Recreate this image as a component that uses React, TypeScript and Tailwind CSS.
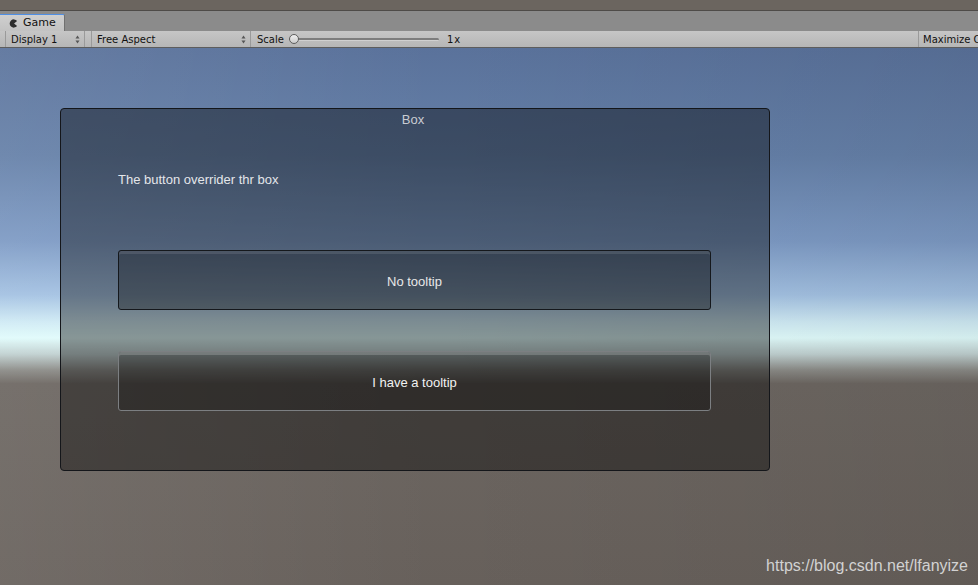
import React from "react";

const Arrows = () => (
  <svg width="5" height="9" viewBox="0 0 5 9" className="shrink-0">
    <path d="M2.5 0.5 L4.5 3.5 L0.5 3.5 Z" fill="#555" />
    <path d="M2.5 8.5 L4.5 5.5 L0.5 5.5 Z" fill="#555" />
  </svg>
);

const GameIcon = () => (
  <svg width="9" height="9" viewBox="0 0 10 10" className="shrink-0">
    <path d="M9 2.2 A4.6 4.6 0 1 0 9 7.8 L5.6 5 Z" fill="#2e2e2e" />
  </svg>
);

const UnityButton = ({ label, hover }: { label: string; hover?: boolean }) => (
  <div
    className={
      hover
        ? "h-[60px] w-[593px] flex items-center justify-center pt-[3px] rounded-[3px] border border-[#7c7f82] bg-black/25 shadow-[inset_0_3px_0_rgba(255,255,255,0.18)] text-[13px] text-[#f2f2f2]"
        : "h-[60px] w-[593px] flex items-center justify-center pt-[3px] rounded-[3px] border border-[#15181c] bg-black/30 shadow-[inset_0_3px_0_rgba(255,255,255,0.1)] text-[13px] text-[#e8e8e8]"
    }
  >
    {label}
  </div>
);

export default function App() {
  return (
    <div
      className="relative w-[978px] h-[585px] flex flex-col overflow-hidden"
      style={{ fontFamily: '"DejaVu Sans", sans-serif' }}
    >
      {/* outer strip */}
      <div className="h-[10px] bg-[#6b655f] border-b border-[#4e4b48] box-content" />

      {/* tab bar */}
      <div className="h-[20px] bg-[#8b8b8b] flex items-end">
        <div className="h-[17px] w-[65px] bg-[linear-gradient(to_bottom,#cfcfcf,#c2c2c2)] border-t border-[#4f8fe6] border-r border-r-[#707070] rounded-tr-[2px] flex items-center gap-[5px] pl-[9px] text-[11px] text-[#111]">
          <GameIcon />
          <span>Game</span>
        </div>
      </div>

      {/* toolbar */}
      <div className="h-[17px] bg-[linear-gradient(to_bottom,#c6c6c6,#b6b6b6)] border-b border-[#5d5d5d] flex items-center text-[10px] text-[#111]">
        <div className="w-[5px]" />
        <div className="h-full w-[80px] border-l border-r border-[#9a9a9a] flex items-center justify-between pl-[5px] pr-[4px]">
          <span>Display 1</span>
          <Arrows />
        </div>
        <div className="w-[6px]" />
        <div className="h-full w-[160px] border-l border-r border-[#9a9a9a] flex items-center justify-between pl-[5px] pr-[4px]">
          <span>Free Aspect</span>
          <Arrows />
        </div>
        <div className="pl-[6px]">Scale</div>
        <div className="ml-[5px] relative w-[150px] h-[10px] flex items-center">
          <div className="w-full h-[3px] rounded-full bg-[#7d7d7d] border-b border-[#d0d0d0]" />
          <div className="absolute left-0 top-0 w-[10px] h-[10px] rounded-full border border-[#5e5e5e] bg-[linear-gradient(to_bottom,#f0f0f0,#cacaca)]" />
        </div>
        <div className="ml-[8px] tracking-[1px]">1x</div>
        <div className="flex-1" />
        <div className="h-full w-[60px] border-l border-[#9a9a9a] pl-[4px] flex items-center whitespace-nowrap overflow-hidden">
          Maximize On Play
        </div>
      </div>

      {/* scene */}
      <div className="relative flex-1 bg-[linear-gradient(to_bottom,#5a729b_0%,#6580a8_20%,#7d9ac4_36%,#a3c1e2_46%,#cfeaf4_51%,#e0fbfb_54%,#c0d0d0_57%,#8a8a86_60%,#6c6661_62.5%,#67605b_100%)] pt-[60px] pl-[60px]">
        <div className="absolute inset-0 bg-[linear-gradient(to_right,rgba(255,255,255,0.07),rgba(255,255,255,0)_45%,rgba(0,0,0,0.06))]" />
        <div className="relative w-[710px] h-[363px] rounded-[4px] border border-[#14161a] bg-black/40 flex flex-col items-start text-[13px]" style={{ fontFamily: '"Liberation Sans", Arial, sans-serif' }}>
          <div className="w-full text-center leading-[16px] mt-[3px] pr-[4px] text-[#c9ccd2]">Box</div>
          <div className="ml-[57px] mt-[44px] leading-[16px] text-[#e4e6ea]">The button overrider thr box</div>
          <div className="ml-[57px] mt-[62px]">
            <UnityButton label="No tooltip" />
          </div>
          <div className="ml-[57px] mt-[41px]">
            <UnityButton label="I have a tooltip" hover />
          </div>
        </div>
      </div>

      <div
        className="absolute right-[10px] bottom-[7px] text-[16px] text-[#d2d2d2]"
        style={{ fontFamily: '"Liberation Sans", Arial, sans-serif' }}
      >
        https://blog.csdn.net/lfanyize
      </div>
    </div>
  );
}
